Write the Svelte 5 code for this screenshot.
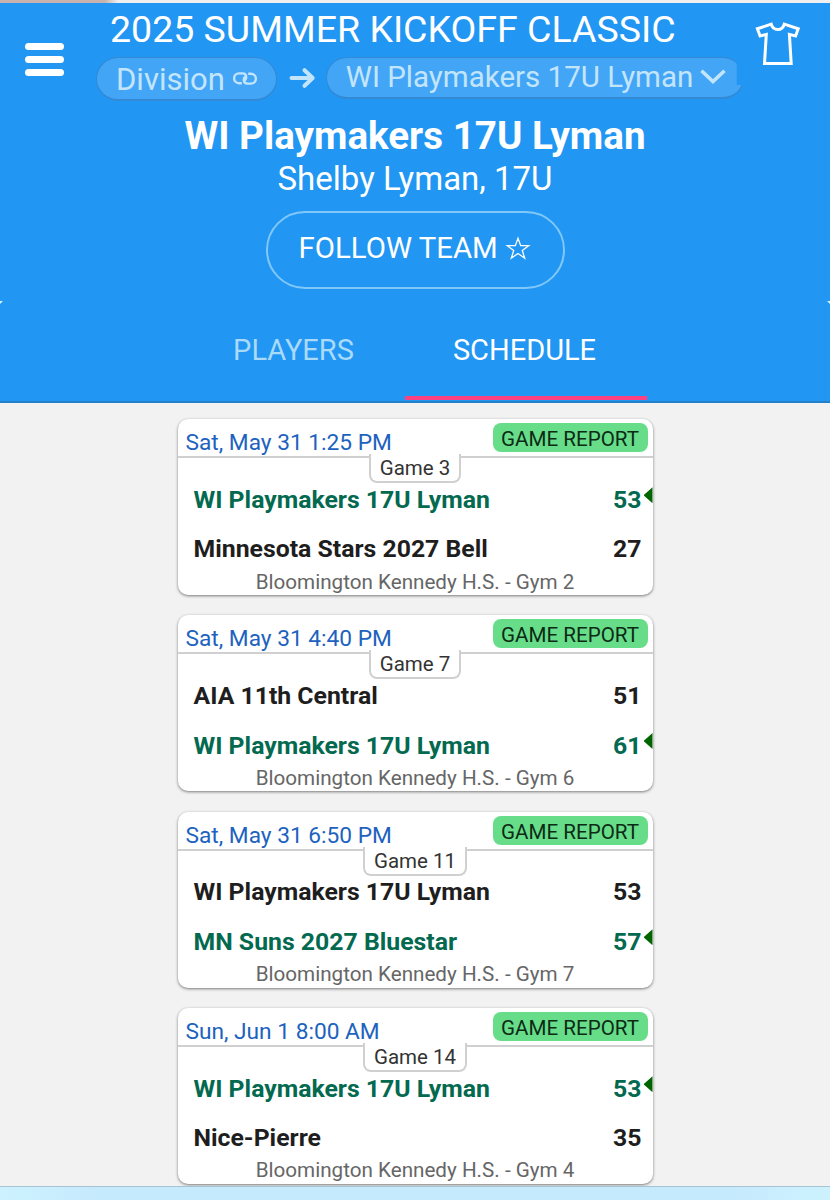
<script lang="ts">
	interface Side {
		name: string;
		score: number;
	}

	interface Game {
		time: string;
		label: string;
		home: Side;
		away: Side;
		venue: string;
	}

	const tabs = ['Players', 'Schedule'];
	let activeTab = $state('Schedule');
	let following = $state(false);

	const games: Game[] = [
		{
			time: 'Sat, May 31 1:25 PM',
			label: 'Game 3',
			home: { name: 'WI Playmakers 17U Lyman', score: 53 },
			away: { name: 'Minnesota Stars 2027 Bell', score: 27 },
			venue: 'Bloomington Kennedy H.S. - Gym 2'
		},
		{
			time: 'Sat, May 31 4:40 PM',
			label: 'Game 7',
			home: { name: 'AIA 11th Central', score: 51 },
			away: { name: 'WI Playmakers 17U Lyman', score: 61 },
			venue: 'Bloomington Kennedy H.S. - Gym 6'
		},
		{
			time: 'Sat, May 31 6:50 PM',
			label: 'Game 11',
			home: { name: 'WI Playmakers 17U Lyman', score: 53 },
			away: { name: 'MN Suns 2027 Bluestar', score: 57 },
			venue: 'Bloomington Kennedy H.S. - Gym 7'
		},
		{
			time: 'Sun, Jun 1 8:00 AM',
			label: 'Game 14',
			home: { name: 'WI Playmakers 17U Lyman', score: 53 },
			away: { name: 'Nice-Pierre', score: 35 },
			venue: 'Bloomington Kennedy H.S. - Gym 4'
		}
	];
</script>

{#snippet side(team: Side, other: Side)}
	<div class="side" class:winner={team.score > other.score}>
		<span class="name">{team.name}</span>
		<span class="score">{team.score}</span>
		<span class="arrow"></span>
	</div>
{/snippet}

<div class="page">
	<div class="top-strip"></div>

	<header>
		<div class="toolbar">
			<button class="menu" aria-label="Menu">
				<span></span>
				<span></span>
				<span></span>
			</button>

			<div class="event">
				<h1>2025 SUMMER KICKOFF CLASSIC</h1>
				<div class="crumbs">
					<button class="pill division">
						<span>Division</span>
						<svg width="24" height="13" viewBox="0 0 24 13" fill="none" stroke="currentColor" stroke-width="2.4">
							<path d="M8.8 11.2H6A4.9 4.9 0 0 1 6 1.4H9.5Q13.2 1.4 13.2 5T10.3 8" />
							<path d="M15.2 1.8H18A4.9 4.9 0 0 1 18 11.6H14.5Q10.8 11.6 10.8 8T13.7 5" />
						</svg>
					</button>
					<svg class="next" width="27" height="22" viewBox="0 0 27 22" fill="none" stroke="currentColor" stroke-width="4" stroke-linecap="round" stroke-linejoin="round">
						<path d="M2.5 11H23M15.5 3.2L23.7 11L15.5 18.8" />
					</svg>
					<button class="pill team-select">
						<span>WI Playmakers 17U Lyman</span>
						<svg width="26" height="16" viewBox="0 0 26 16" fill="none" stroke="currentColor" stroke-width="3.6">
							<path d="M1.5 1.7L13 12.6L24.5 1.7" />
						</svg>
					</button>
				</div>
			</div>

			<button class="shirt" aria-label="Teams">
				<svg width="46" height="44" viewBox="0 0 46 44" fill="none" stroke="currentColor" stroke-width="3">
					<path d="M16.2 2.2L2.4 6.8L5.1 14L11.3 12.4L9.5 41.6H36.2L34.4 12.4L40.6 14L43.2 6.8L29.3 2.2Q28 7.6 22.8 7.6T16.2 2.2Z" />
				</svg>
			</button>
		</div>

		<div class="team">
			<h2>WI Playmakers 17U Lyman</h2>
			<p>Shelby Lyman, 17U</p>
			<button class="follow" onclick={() => (following = !following)}>
				<span>{following ? 'FOLLOWING' : 'FOLLOW TEAM'}</span>
				<svg width="26" height="25" viewBox="0 0 26 25" fill={following ? 'currentColor' : 'none'} stroke="currentColor" stroke-width="1.3">
					<path d="M13 2.2L15.7 9.7H23.7L17.3 14.5L19.7 22.2L13 17.5L6.3 22.2L8.7 14.5L2.3 9.7H10.3Z" />
				</svg>
			</button>
		</div>

		<nav>
			{#each tabs as tab}
				<button class="tab" class:active={activeTab === tab} onclick={() => (activeTab = tab)}>
					{tab}
				</button>
			{/each}
		</nav>
	</header>

	<main>
		{#each games as game}
			<article>
				<div class="card-head">
					<span class="time">{game.time}</span>
					<button class="report">GAME REPORT</button>
				</div>
				<div class="label"><span>{game.label}</span></div>
				{@render side(game.home, game.away)}
				{@render side(game.away, game.home)}
				<div class="venue">{game.venue}</div>
			</article>
		{/each}
	</main>

	<footer></footer>
</div>

<style>
	:global(body) {
		margin: 0;
		background: #f2f2f2;
	}

	button {
		margin: 0;
		padding: 0;
		border: 0;
		background: none;
		color: inherit;
		font: inherit;
		letter-spacing: inherit;
		cursor: pointer;
	}

	svg {
		display: block;
		flex: none;
	}

	.page {
		display: flex;
		flex-direction: column;
		height: 1200px;
		overflow: hidden;
		background: #f2f2f2;
		font-family: Roboto, sans-serif;
		white-space: nowrap;
	}

	.top-strip {
		flex: none;
		height: 3px;
		background: linear-gradient(90deg, #c9b3ae 0, #c9b3ae 105px, #f0f0f0 118px);
	}

	header {
		position: relative;
		flex: none;
		box-sizing: border-box;
		height: 400px;
		border-bottom: 2px solid #2380c9;
		background: #2196f3;
		color: #fff;
	}

	/* slivers of page showing at the rounded corners of the tab bar */
	header::before,
	header::after {
		content: '';
		position: absolute;
		top: 298px;
		left: 0;
		width: 3px;
		height: 3px;
		background: #d8effd;
		clip-path: polygon(0 0, 100% 0, 0 100%);
	}

	header::after {
		left: auto;
		right: 0;
		transform: scaleX(-1);
	}

	.toolbar {
		display: flex;
		align-items: flex-start;
		height: 104px;
	}

	.menu {
		display: flex;
		flex-direction: column;
		gap: 6px;
		width: 39px;
		margin: 40px 32px 0 25px;
	}

	.menu span {
		height: 7px;
		border-radius: 4px;
		background: #fff;
	}

	.event {
		width: 648px;
	}

	h1 {
		margin: 2px 0 0 14px;
		font-size: 37.5px;
		font-weight: 400;
		line-height: 49px;
	}

	.crumbs {
		display: flex;
		align-items: flex-start;
		margin-top: 3px;
		color: #c3e5fc;
	}

	.pill {
		display: flex;
		align-items: center;
		box-sizing: border-box;
		border: 1px solid #3389d4;
		border-bottom-width: 2px;
		border-radius: 22px;
		background: #43a5f6;
	}

	.division {
		gap: 8px;
		width: 181px;
		height: 44px;
		padding: 1px 0 0 19px;
		font-size: 31px;
	}

	.division svg {
		margin-bottom: 2px;
	}

	.next {
		margin: 10px 10px 0 12px;
	}

	.team-select {
		gap: 7px;
		width: 419px;
		height: 42px;
		padding: 0 0 2px 19px;
		font-size: 29.5px;
		clip-path: polygon(0 0, 411px 0, 411px 28px, 100% 28px, 100% 100%, 0 100%);
	}

	.shirt {
		margin: 19px 0 0 11px;
	}

	.team {
		display: flex;
		flex-direction: column;
		align-items: center;
		height: 194px;
	}

	h2 {
		margin: 6px 0 0;
		font-size: 38.6px;
		font-weight: 700;
		line-height: 46px;
	}

	p {
		margin: 1px 0 0;
		font-size: 33px;
		line-height: 38px;
	}

	.follow {
		display: flex;
		align-items: center;
		gap: 7px;
		box-sizing: border-box;
		width: 299px;
		height: 78px;
		margin-top: 13px;
		padding: 0 0 4px 31px;
		border: 2px solid #80c8f8;
		border-radius: 40px;
		font-size: 29.4px;
	}

	nav {
		display: flex;
		justify-content: center;
		height: 100px;
		margin-right: 1px;
	}

	.tab {
		box-sizing: border-box;
		height: 99px;
		padding: 3px 0 0;
		border-bottom: 4px solid transparent;
		color: #a9daf9;
		font-size: 29px;
		text-transform: uppercase;
	}

	.tab:first-child {
		width: 222px;
	}

	.tab:last-child {
		width: 242px;
		padding-right: 2px;
	}

	.tab.active {
		border-bottom-color: #ff4081;
		color: #fff;
	}

	main {
		display: flex;
		flex: 1;
		flex-direction: column;
		align-items: center;
		gap: 20.3px;
		min-height: 0;
		padding-top: 16px;
		overflow: hidden;
	}

	article {
		flex: none;
		width: 475px;
		height: 176px;
		border-radius: 10px;
		background: #fff;
		box-shadow: 0 1px 3px rgba(0, 0, 0, 0.5);
	}

	.card-head {
		display: flex;
		justify-content: space-between;
		box-sizing: border-box;
		height: 39px;
		padding: 4px 5px 0 8px;
		border-bottom: 2px solid #d0d0d0;
	}

	.time {
		color: #1c62be;
		font-size: 22.7px;
		line-height: 39px;
	}

	.report {
		width: 155px;
		height: 29px;
		padding-top: 1px;
		border-radius: 8px;
		background: #67dd8a;
		color: #0c2a14;
		font-size: 20.6px;
		line-height: 31px;
	}

	.label {
		display: flex;
		justify-content: center;
		height: 16.5px;
	}

	.label span {
		box-sizing: border-box;
		height: 29px;
		margin-top: -4px;
		padding: 0 9px;
		border: 2px solid #d0d0d0;
		border-top: 0;
		border-radius: 0 0 8px 8px;
		background: #fff;
		color: #333;
		font-size: 20.5px;
		line-height: 28px;
	}

	.side {
		display: flex;
		align-items: center;
		height: 49.5px;
		padding-left: 16px;
		color: #1e1e1e;
		font-size: 24.8px;
		font-weight: 700;
	}

	.name {
		flex: 1;
	}

	.arrow {
		width: 9px;
		height: 16px;
		margin: 0 0 8px 2px;
	}

	.winner {
		color: #03694f;
	}

	.winner .arrow {
		background: #006400;
		clip-path: polygon(0 50%, 100% 0, 100% 100%);
	}

	.venue {
		margin-top: -4px;
		color: #666;
		font-size: 20.65px;
		line-height: 24px;
		text-align: center;
	}

	footer {
		flex: none;
		height: 13px;
		border-top: 1px solid #a9c4d0;
		background: linear-gradient(90deg, #cdf2fe, #c6eafd 12%, #c6eafd 88%, #cdf2fe);
	}
</style>
